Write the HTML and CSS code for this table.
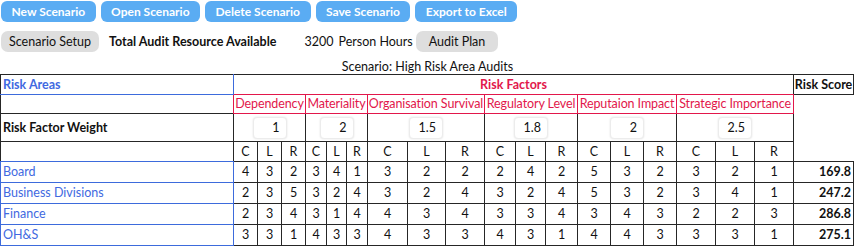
FILE: index.html
```html
<!DOCTYPE html>
<html lang="en">
<head>
    <meta charset="UTF-8">
    <meta name="viewport" content="width=device-width, initial-scale=1.0">
    <title>Audit Risk Scenario</title>
    <link rel="stylesheet" href="styles.css">
</head>
<body>
    <div class="toolbar">
        <button class="btn">New Scenario</button>
        <button class="btn">Open Scenario</button>
        <button class="btn">Delete Scenario</button>
        <button class="btn">Save Scenario</button>
        <button class="btn">Export to Excel</button>
    </div>
    <div class="setup-row">
        <button class="btn-grey">Scenario Setup</button>
        <span class="resource-label">Total Audit Resource Available</span>
        <span class="resource-value">3200</span>
        <span class="resource-unit">Person Hours</span>
        <button class="btn-grey btn-plan">Audit Plan</button>
    </div>
    <div class="scenario-name">Scenario: High Risk Area Audits</div>

    <table class="risk-table">
        <colgroup>
            <col style="width: 233px">
            <col style="width: 24px"><col style="width: 24px"><col style="width: 24px">
            <col style="width: 21px"><col style="width: 20px"><col style="width: 21px">
            <col style="width: 40px"><col style="width: 38px"><col style="width: 39px">
            <col style="width: 31px"><col style="width: 30px"><col style="width: 32px">
            <col style="width: 33px"><col style="width: 33px"><col style="width: 33px">
            <col style="width: 39px"><col style="width: 39px"><col style="width: 39px">
            <col style="width: 60px">
        </colgroup>
        <tr class="row-head">
            <td class="areas-head">Risk Areas</td>
            <td class="factors-head" colspan="18">Risk Factors</td>
            <td class="score-head">Risk Score</td>
        </tr>
        <tr class="row-names">
            <td class="blank-name"></td>
            <td class="factor" colspan="3">Dependency</td>
            <td class="factor" colspan="3">Materiality</td>
            <td class="factor" colspan="3">Organisation Survival</td>
            <td class="factor" colspan="3">Regulatory Level</td>
            <td class="factor" colspan="3">Reputaion Impact</td>
            <td class="factor" colspan="3">Strategic Importance</td>
            <td class="score-gap" rowspan="3"></td>
        </tr>
        <tr class="row-weights">
            <td class="weight-label">Risk Factor Weight</td>
            <td class="weight" colspan="3"><input class="weight-input" value="1"></td>
            <td class="weight" colspan="3"><input class="weight-input" value="2"></td>
            <td class="weight" colspan="3"><input class="weight-input" value="1.5"></td>
            <td class="weight" colspan="3"><input class="weight-input" value="1.8"></td>
            <td class="weight" colspan="3"><input class="weight-input" value="2"></td>
            <td class="weight" colspan="3"><input class="weight-input" value="2.5"></td>
        </tr>
        <tr class="row-clr" id="clrRow">
            <td class="blank-clr"></td>
        </tr>
        <tbody id="areaRows"></tbody>
    </table>

<script>
    const areas = [
        { name: 'Board', scores: [4,3,2, 3,4,1, 3,2,2, 2,4,2, 5,3,2, 3,2,1], total: '169.8' },
        { name: 'Business Divisions', scores: [2,3,5, 3,2,4, 3,2,4, 3,2,4, 5,3,2, 3,4,1], total: '247.2' },
        { name: 'Finance', scores: [2,3,4, 3,1,4, 4,3,4, 3,3,4, 3,4,3, 2,2,3], total: '286.8' },
        { name: 'OH&S', scores: [3,3,1, 4,3,3, 4,3,3, 4,3,1, 4,4,3, 3,3,1], total: '275.1' }
    ];

    // C / L / R sub headings under every factor
    var clrRow = document.getElementById('clrRow');
    for (var i = 0; i < 6; i++) {
        ['C', 'L', 'R'].forEach(function (letter) {
            clrRow.innerHTML += '<td class="cell">' + letter + '</td>';
        });
    }

    var rowsHtml = '';
    areas.forEach(function (area) {
        rowsHtml += '<tr class="row-area"><td class="area-name">' + area.name.replace('&', '&amp;') + '</td>';
        area.scores.forEach(function (s) {
            rowsHtml += '<td class="cell">' + s + '</td>';
        });
        rowsHtml += '<td class="score">' + area.total + '</td></tr>';
    });
    document.getElementById('areaRows').innerHTML = rowsHtml;
</script>
</body>
</html>
```

FILE: styles.css
```css
:root {
    --btn-blue: #5aacf3;
    --btn-grey: #dedede;
    --line-dark: #262626;
    --line-blue: #3d6bdc;
    --line-red: #e2174b;
    --text-blue: #4169e1;
    --text-red: #e2174b;
    --text-color: #111;
}

body {
    font-family: 'Lato', 'Open Sans', sans-serif;
    font-size: 12.5px;
    color: var(--text-color);
    margin: 0;
    padding: 0;
    background: #fff;
}

button {
    font-family: inherit;
    font-size: 12.5px;
    border: none;
    cursor: pointer;
}

.toolbar {
    display: flex;
    gap: 5px;
    padding: 1px 0 0 1px;
}

.btn {
    height: 21px;
    padding: 0 10.5px;
    background-color: var(--btn-blue);
    color: #fff;
    font-size: 12px;
    font-weight: bold;
    border-radius: 6px;
}

.setup-row {
    display: flex;
    align-items: center;
    margin-top: 9px;
    padding-left: 1px;
    height: 21px;
}

.btn-grey {
    height: 21px;
    padding: 0 8px;
    background-color: var(--btn-grey);
    color: var(--text-color);
    border-radius: 7px;
}

.btn-plan {
    padding: 0 13px;
}

.resource-label {
    font-weight: bold;
    margin-left: 10px;
}

.resource-value {
    margin-left: 28px;
}

.resource-unit {
    margin-left: 5px;
    margin-right: 3px;
}

.scenario-name {
    text-align: center;
    margin-top: 6px;
    height: 16px;
    line-height: 17px;
}

/* Risk matrix */
.risk-table {
    border-collapse: collapse;
    table-layout: fixed;
    width: 853px;
}

.risk-table td {
    padding: 0;
    height: 19px;
    line-height: 18px;
    white-space: nowrap;
}

.areas-head {
    color: var(--text-blue);
    font-weight: bold;
    padding-left: 2px !important;
    border-top: 1px solid var(--line-dark);
    border-left: 1px solid var(--line-dark);
    border-right: 1px solid var(--line-blue);
    border-bottom: 1px solid var(--line-blue);
}

.factors-head {
    color: var(--text-red);
    font-weight: bold;
    text-align: center;
    border-top: 1px solid var(--line-dark);
    border-bottom: 1px solid var(--line-red);
}

.score-head {
    font-weight: bold;
    text-align: center;
    border: 1px solid var(--line-dark);
}

.row-names td {
    height: 18px;
}

.blank-name {
    border-left: 1px solid var(--line-dark);
}

.factor {
    color: var(--text-red);
    text-align: center;
    letter-spacing: -0.1px;
    border: 1px solid var(--line-red);
}

.score-gap {
    border-left: 1px solid var(--line-dark);
}

.row-weights td {
    height: 27px;
}

.weight-label {
    font-weight: bold;
    padding-left: 2px !important;
    border: 1px solid var(--line-dark);
}

.weight {
    text-align: center;
    border: 1px solid var(--line-dark);
    border-top: 1px solid var(--line-red);
}

.weight-input {
    width: 34px;
    height: 22px;
    box-sizing: border-box;
    font-family: inherit;
    font-size: 12.5px;
    text-align: right;
    padding: 0 6px 0 0;
    border: 1px solid #ececec;
    border-radius: 4px;
    box-shadow: 0 0 2px rgba(0, 0, 0, 0.12);
    vertical-align: middle;
    color: var(--text-color);
}

.blank-clr {
    border: 1px solid var(--line-dark);
    border-bottom: 1px solid var(--line-blue);
}

.cell {
    text-align: center;
    border: 1px solid var(--line-dark);
}

.row-area td {
    height: 20px;
}

.area-name {
    color: var(--text-blue);
    padding-left: 2px !important;
    border: 1px solid var(--line-blue);
}

.score {
    font-weight: bold;
    text-align: right;
    padding-right: 2px !important;
    border: 1px solid var(--line-dark);
}
```
